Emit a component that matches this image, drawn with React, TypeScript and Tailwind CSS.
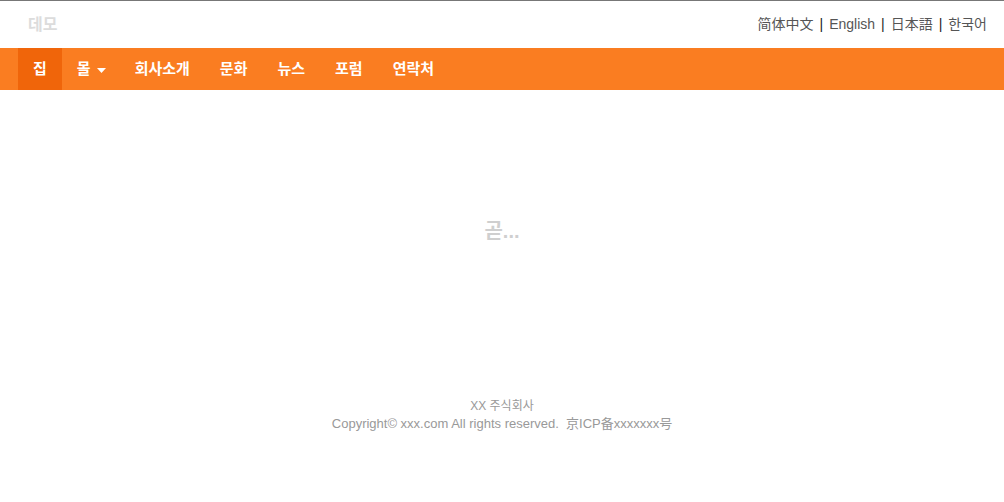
export default function App() {
  const font = { fontFamily: '"Helvetica Neue", "Liberation Sans", "Noto Sans CJK KR", sans-serif' };
  const langs = ['简体中文', 'English', '日本語', '한국어'];
  const nav = ['회사소개', '문화', '뉴스', '포럼', '연락처'];
  return (
    <div className="min-h-[502px] bg-white border-t border-[#777]" style={font}>
      <header className="h-[47px] flex items-center justify-between pl-[28px] pr-[17px]">
        <div className="text-[16px] font-bold text-[#dcdcdc]">데모</div>
        <div className="flex items-center text-[14px] text-[#555]">
          {langs.map((l, i) => (
            <span key={l} className="flex items-center">
              {i > 0 && <span className="mx-[6px] text-[#222]">|</span>}
              <a className="cursor-pointer">{l}</a>
            </span>
          ))}
        </div>
      </header>
      <nav className="h-[42px] bg-[#fa7d21] flex items-stretch pl-[18px] text-white text-[15px] font-bold">
        <a className="flex items-center px-[15px] bg-[#f0650a]">집</a>
        <a className="flex items-center pl-[15px] pr-[14px]">
          몰
          <svg width="9" height="5" viewBox="0 0 9 5" className="ml-[6px] mt-[2px]">
            <path d="M0 0 L9 0 L4.5 5 Z" fill="white" />
          </svg>
        </a>
        {nav.map((n) => (
          <a key={n} className="flex items-center px-[15px]">{n}</a>
        ))}
      </nav>
      <main className="h-[282px] flex items-center justify-center">
        <div className="text-[20px] font-bold text-[#cfcfcf]">곧...</div>
      </main>
      <footer className="pt-[25px] text-center text-[#999]">
        <div className="text-[12px] leading-[18px]">XX 주식회사</div>
        <div className="text-[13px] leading-[18px]">Copyright© xxx.com All rights reserved.&nbsp; 京ICP备xxxxxxx号</div>
      </footer>
    </div>
  );
}
